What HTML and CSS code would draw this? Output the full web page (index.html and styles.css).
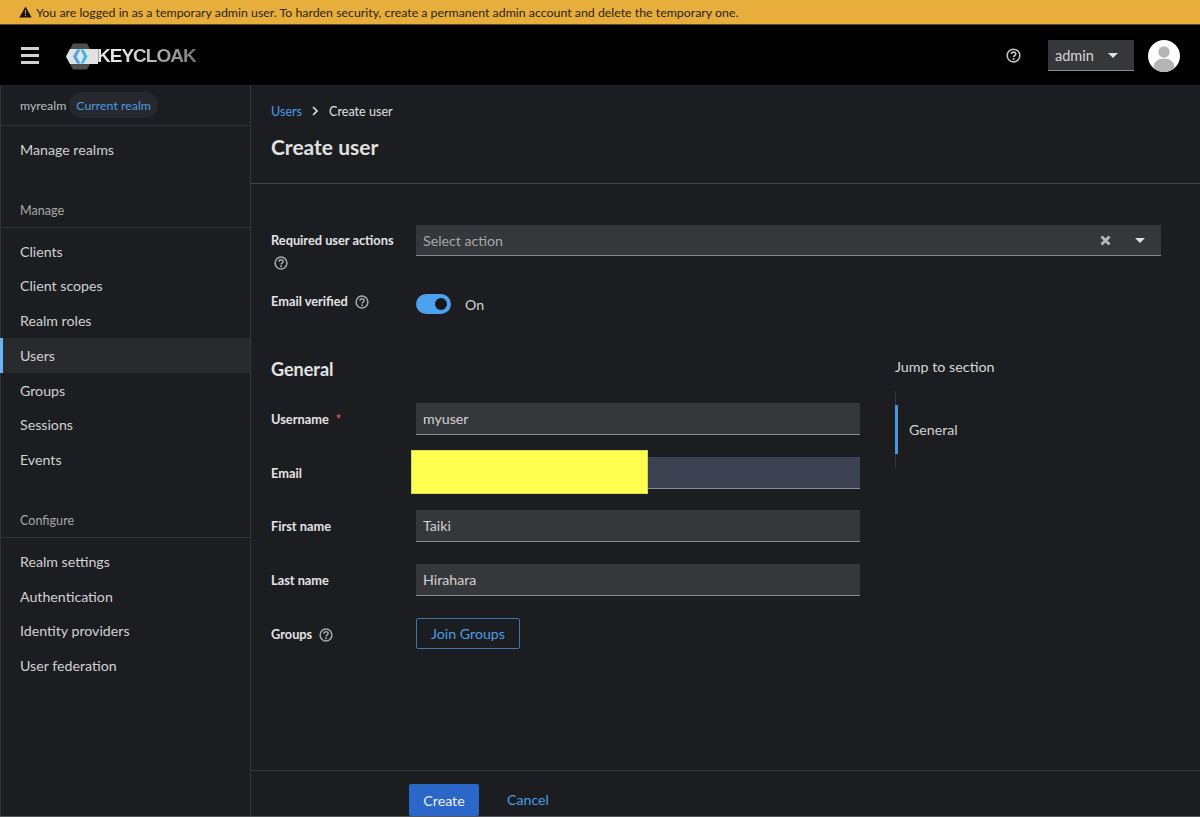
FILE: index.html
```html
<!DOCTYPE html>
<html lang="en">
<head>
<meta charset="utf-8">
<title>Create user</title>
<link rel="stylesheet" href="styles.css">
</head>
<body>
<svg class="defs" width="0" height="0" aria-hidden="true">
  <symbol id="help" viewBox="0 0 14 14">
    <circle cx="7" cy="7" r="5.9" fill="none" stroke="currentColor" stroke-width="1.5"/>
    <path d="M5 5.700c0-1.200.9-1.900 2.100-1.900s2 .7 2 1.800c0 1.500-2 1.500-2 2.900" fill="none" stroke="currentColor" stroke-width="1.5"/>
    <circle cx="7.100" cy="10.300" r=".95" fill="currentColor"/>
  </symbol>
</svg>
<div class="page">
  <div class="banner">
    <svg class="warn" viewBox="0 0 14 13" width="13" height="12"><path d="M7 .5 13.700 12.500H.3Z" fill="#151515"/><path d="M6.400 4.600h1.200l-.2 4.200h-.8Z" fill="#e8ae3c"/><circle cx="7" cy="10.300" r=".7" fill="#e8ae3c"/></svg>
    <span>You are logged in as a temporary admin user. To harden security, create a permanent admin account and delete the temporary one.</span>
  </div>
  <header class="masthead">
    <div class="burger"><i></i><i></i><i></i></div>
    <div class="logo">
      <svg width="33" height="27" viewBox="0 0 33 27">
        <path d="M8 0.500H22L29 13.500 22 26.500H8L1 13.500Z" fill="#4d4d4d"/>
        <path d="M5 6H33V21H5L1 13.500Z" fill="#e2e2e2"/>
        <path d="M12 6.500 8 13.500 12 20.500H15.500L11.500 13.500 15.500 6.500Z" fill="#4aa3e8"/>
        <path d="M18.500 6.500 22.500 13.500 18.500 20.500H15.500L19 13.500 15.500 6.500Z" fill="#38b6f0"/>
      </svg>
      <span class="wordmark">KEYCLOAK</span>
    </div>
    <div class="mast-tools">
      <svg class="mast-help"><use href="#help"/></svg>
      <div class="user-menu"><span>admin</span><i class="caret"></i></div>
      <svg class="avatar" viewBox="0 0 32 32" width="32" height="32">
        <circle cx="16" cy="16" r="16" fill="#fff"/>
        <circle cx="16" cy="12" r="5.700" fill="#b5b5b5"/>
        <path d="M5.500 28c0-6.500 4.500-9.500 10.500-9.500s10.500 3 10.500 9.500a16 16 0 0 1-21 0Z" fill="#b5b5b5"/>
      </svg>
    </div>
  </header>
  <div class="body">
    <nav class="sidebar">
      <div class="realm"><span>myrealm</span><span class="pill">Current realm</span></div>
      <a class="nav-item top">Manage realms</a>
      <div class="group-title">Manage</div>
      <a class="nav-item">Clients</a>
      <a class="nav-item">Client scopes</a>
      <a class="nav-item">Realm roles</a>
      <a class="nav-item current">Users</a>
      <a class="nav-item">Groups</a>
      <a class="nav-item">Sessions</a>
      <a class="nav-item">Events</a>
      <div class="group-title">Configure</div>
      <a class="nav-item">Realm settings</a>
      <a class="nav-item">Authentication</a>
      <a class="nav-item">Identity providers</a>
      <a class="nav-item">User federation</a>
    </nav>
    <main class="main">
      <section class="page-head">
        <div class="crumbs"><a>Users</a><svg width="6" height="10" viewBox="0 0 6 10"><path d="M1 1l4 4-4 4" fill="none" stroke="#e0e0e0" stroke-width="1.600"/></svg><span>Create user</span></div>
        <h1>Create user</h1>
      </section>
      <section class="content">
        <div class="top-form">
          <div class="row actions-row">
            <label class="label">Required user actions <svg class="help block"><use href="#help"/></svg></label>
            <div class="field select">
              <span class="placeholder">Select action</span>
              <svg class="clear" width="11" height="11" viewBox="0 0 11 11"><path d="M1.500 1.500l8 8M9.500 1.500l-8 8" stroke="#b8b8b8" stroke-width="2.800"/></svg>
              <i class="caret"></i>
            </div>
          </div>
          <div class="row verified-row">
            <label class="label">Email verified <svg class="help"><use href="#help"/></svg></label>
            <div class="toggle-wrap"><span class="toggle"><i></i></span><span>On</span></div>
          </div>
        </div>
        <div class="columns">
          <div class="general">
            <h2>General</h2>
            <div class="row form-row"><label class="label">Username <em>*</em></label><div class="field">myuser</div></div>
            <div class="row form-row email"><label class="label">Email</label><div class="field autofill"></div><div class="redaction"></div></div>
            <div class="row form-row"><label class="label">First name</label><div class="field">Taiki</div></div>
            <div class="row form-row"><label class="label">Last name</label><div class="field">Hirahara</div></div>
            <div class="row form-row"><label class="label">Groups <svg class="help"><use href="#help"/></svg></label><button class="join">Join Groups</button></div>
          </div>
          <aside class="jump">
            <div class="jump-title">Jump to section</div>
            <div class="jump-list"><a>General</a></div>
          </aside>
        </div>
      </section>
      <footer class="actions">
        <button class="primary">Create</button>
        <a class="cancel">Cancel</a>
      </footer>
    </main>
  </div>
</div>
</body>
</html>
```
FILE: styles.css
```css
* { box-sizing: border-box; }
html, body { margin: 0; height: 100%; overflow: hidden; }
body { background: #1b1d21; color: #e0e0e0; font-family: Lato, "Liberation Sans", sans-serif; font-size: 14.200px; }
.defs { position: absolute; }
.page { height: 817px; display: flex; flex-direction: column; border-bottom: 1px solid #55565a; }
.banner { height: 25px; flex: none; background: #e8ae3c; color: #2b2414; font-size: 12.350px; display: flex; align-items: center; gap: 4px; padding-left: 19px; border-bottom: 1px solid #5a4a20; }
.warn { flex: none; }
.masthead { height: 60px; flex: none; background: #000; display: flex; align-items: center; padding: 1px 20px 0 21px; }
.burger { width: 18px; display: flex; flex-direction: column; gap: 3.700px; margin-right: 26px; }
.burger i { display: block; height: 3px; background: #d2d2d2; }
.logo { display: flex; align-items: center; margin-top: 1px; }
.logo svg { display: block; margin-right: -1px; }
.wordmark { font-family: "Liberation Sans", sans-serif; font-weight: 700; font-size: 19px; letter-spacing: -1px; background: linear-gradient(90deg, #e6e6e6 25%, #767676); -webkit-background-clip: text; background-clip: text; color: transparent; }
.mast-tools { margin-left: auto; display: flex; align-items: center; }
.mast-help { width: 15px; height: 15px; color: #c4c4c4; margin-right: 27px; }
.user-menu { width: 86px; height: 31px; background: #36373b; border-bottom: 1px solid #8a8b8d; display: flex; align-items: center; justify-content: space-between; padding: 0 16px 0 7px; color: #d8d8d8; margin-right: 14px; font-size: 14.500px; }
.caret { display: block; width: 0; height: 0; border-left: 5px solid transparent; border-right: 5px solid transparent; border-top: 5px solid #e0e0e0; }
.avatar { display: block; }
.body { flex: 1; display: flex; min-height: 0; }
.sidebar { width: 251px; flex: none; border-right: 1px solid #36373b; border-left: 1px solid #303136; background: #1b1d21; color: #d2d2d2; display: flex; flex-direction: column; }
.realm { height: 41px; border-bottom: 1px solid #303136; display: flex; align-items: center; gap: 3px; padding-left: 19px; font-size: 12.350px; color: #bdbdbd; flex: none; }
.pill { background: #26282d; color: #4b9de4; border-radius: 13px; height: 26px; padding: 0 7px; display: flex; align-items: center; }
.nav-item { display: flex; align-items: center; height: 34.750px; padding-left: 19px; flex: none; }
.nav-item.top { margin-top: 6px; }
.nav-item.current { background: #292a2e; border-left: 3px solid #6cb4f5; margin-left: -1px; padding-left: 17px; }
.group-title { height: 35px; flex: none; padding: 1px 0 0 19px; border-bottom: 1px solid #303136; font-size: 12.600px; color: #a8a8a8; display: flex; align-items: center; margin: 26px 0 6px; }
.main { flex: 1; min-width: 0; display: flex; flex-direction: column; }
.page-head { height: 99px; flex: none; border-bottom: 1px solid #47484c; padding: 17px 20px 0; }
.crumbs { display: flex; align-items: center; gap: 9px; font-size: 12.600px; color: #e0e0e0; height: 18px; }
.crumbs a { color: #4b9de4; margin-right: 1px; }
.crumbs svg { margin-right: 2px; }
h1 { margin: 13px 0 0; font-size: 21px; font-weight: 700; color: #e0e0e0; line-height: 28px; }
.content { flex: 1; min-height: 0; padding: 41px 0 0 20px; }
.row { display: flex; }
.label { width: 145px; flex: none; font-size: 12.800px; font-weight: 700; color: #e4e4e4; }
.help { width: 14px; height: 14px; vertical-align: -3px; margin-left: 4px; color: #a9a9a9; }
.help.block { display: block; margin: 7px 0 0 3px; }
.label em { color: #d9534f; font-style: normal; margin-left: 4px; }
.field { height: 32px; width: 444px; background: #36373b; border-bottom: 1px solid #8a8b8d; padding: 0 7px; display: flex; align-items: center; color: #d2d2d2; }
.actions-row { height: 69px; }
.actions-row .label { padding-top: 7px; line-height: 17px; }
.select { width: 745px; height: 31px; padding-right: 16px; }
.placeholder { color: #a8a8a8; flex: 1; }
.clear { margin-right: 24px; }
.verified-row { height: 58px; }
.verified-row .label { line-height: 15px; }
.toggle-wrap { display: flex; align-items: center; gap: 14px; height: 20px; color: #d2d2d2; }
.toggle { width: 35px; height: 20px; background: #4ca2f0; border-radius: 10px; display: flex; align-items: center; justify-content: flex-end; padding-right: 4px; }
.toggle i { width: 12px; height: 12px; background: #17181b; border-radius: 50%; }
.columns { display: flex; }
.general { width: 624px; flex: none; }
h2 { margin: 0; font-size: 18px; font-weight: 700; line-height: 24px; height: 51px; padding-top: 5px; color: #e4e4e4; }
.form-row { height: 53.700px; align-items: flex-start; position: relative; }
.form-row .label { line-height: 32px; }
.autofill { background: #3d4252; }
.redaction { position: absolute; left: 140px; top: -7px; width: 237px; height: 44px; background: #ffff50; border: 1px solid #d9d94a; }
.join { width: 104px; height: 31px; background: transparent; border: 1px solid #3c76ab; border-radius: 2px; color: #4b9de4; font: inherit; padding: 0; }
.jump { padding-top: 6px; }
.jump-title { font-size: 14.300px; color: #d8d8d8; height: 18px; line-height: 18px; }
.jump-list { margin-top: 15px; border-left: 1px solid #36373b; height: 76px; display: flex; align-items: center; }
.jump-list a { display: flex; align-items: center; height: 49px; border-left: 3px solid #4a97de; margin-left: -1px; padding-left: 11px; color: #d2d2d2; }
.actions { height: 46px; flex: none; border-top: 1px solid #36373b; padding: 13px 0 0 158px; display: flex; align-items: flex-start; gap: 28px; }
.primary { width: 70px; height: 32px; background: #2b66c9; border: 0; border-radius: 2px; color: #f0f0f0; font: inherit; padding: 0; }
.cancel { color: #4b9de4; line-height: 32px; }
```
